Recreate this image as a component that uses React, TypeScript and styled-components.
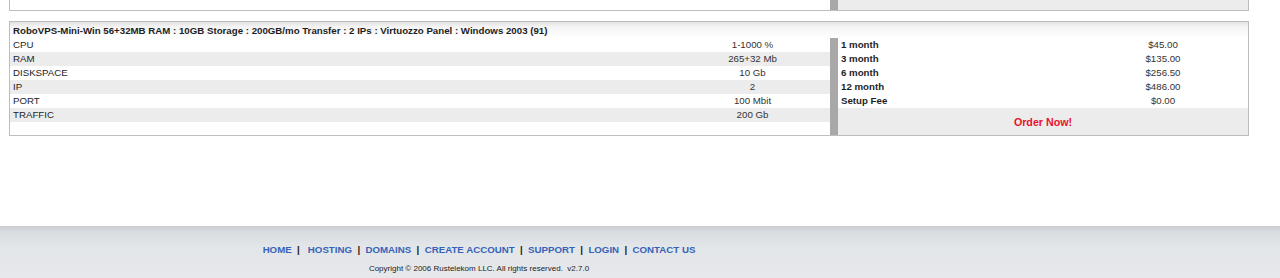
import * as React from "react";
import styled, { createGlobalStyle } from "styled-components";

const GlobalStyle = createGlobalStyle`
  body {
    margin: 0;
    background: #fff;
    font-family: "Liberation Sans", Arial, sans-serif;
    color: #222;
  }
`;

const Page = styled.div`
  height: 278px;
  display: flex;
  flex-direction: column;
  overflow: hidden;
`;

const Content = styled.div`
  flex: 1;
  padding: 0 0 0 9px;
  display: flex;
  flex-direction: column;
  gap: 10px;
`;

const Card = styled.div<{ $tail?: boolean }>`
  width: 1240px;
  box-sizing: border-box;
  border: 1px solid #bdbdbd;
  border-top: ${(p) => (p.$tail ? "none" : "1px solid #bdbdbd")};
  background: #fff;
`;

const Header = styled.div`
  height: 15px;
  padding: 1px 3px 0;
  line-height: 15px;
  font-size: 9.7px;
  font-weight: bold;
  color: #1e1e1e;
  background: linear-gradient(#e2e2e2, #f4f4f4 30%, #fff);
`;

const Body = styled.div<{ $h?: number }>`
  display: grid;
  grid-template-columns: 820px 8px 410px;
  ${(p) => (p.$h ? `height: ${p.$h}px;` : "")}
`;

const Bar = styled.div`
  background: #a8a8a8;
`;

const Specs = styled.div`
  display: flex;
  flex-direction: column;
`;

const Row = styled.div<{ $shade?: boolean; $right?: boolean }>`
  display: grid;
  grid-template-columns: ${(p) => (p.$right ? "240px 1fr" : "665px 1fr")};
  height: 14px;
  line-height: 14px;
  font-size: 9.7px;
  background: ${(p) => (p.$shade ? "#ececec" : "#fff")};
`;

const Label = styled.span<{ $bold?: boolean }>`
  padding-left: 3px;
  font-weight: ${(p) => (p.$bold ? "bold" : "normal")};
  color: #1e1e1e;
`;

const Value = styled.span`
  text-align: center;
  color: #333;
`;

const Prices = styled.div`
  display: flex;
  flex-direction: column;
`;

const OrderCell = styled.div`
  flex: 1;
  background: #ececec;
  display: flex;
  align-items: center;
  justify-content: center;
`;

const OrderLink = styled.a`
  color: #e8112d;
  font-size: 10.7px;
  font-weight: bold;
  text-decoration: none;
`;

const TailRight = styled.div`
  background: #ececec;
`;

const Footer = styled.div`
  height: 52px;
  background: linear-gradient(#c9cdd1 0px, #d8dbdf 6px, #e3e6e9 20px, #e6e8eb);
  display: flex;
  flex-direction: column;
  align-items: flex-start;
  width: 100%;
`;

const FooterInner = styled.div`
  width: 958px;
  display: flex;
  flex-direction: column;
  align-items: center;
`;

const Nav = styled.div`
  margin-top: 17px;
  height: 14px;
  line-height: 14px;
  font-size: 9.7px;
  font-weight: bold;
  color: #222;
  white-space: pre;
`;

const NavLink = styled.a`
  color: #3563b8;
  text-decoration: none;
`;

const Copy = styled.div`
  margin-top: 7px;
  font-size: 8px;
  color: #222;
  white-space: pre;
`;

const specs: [string, string][] = [
  ["CPU", "1-1000 %"],
  ["RAM", "265+32 Mb"],
  ["DISKSPACE", "10 Gb"],
  ["IP", "2"],
  ["PORT", "100 Mbit"],
  ["TRAFFIC", "200 Gb"],
];

const prices: [string, string][] = [
  ["1 month", "$45.00"],
  ["3 month", "$135.00"],
  ["6 month", "$256.50"],
  ["12 month", "$486.00"],
  ["Setup Fee", "$0.00"],
];

const links = ["HOME", "HOSTING", "DOMAINS", "CREATE ACCOUNT", "SUPPORT", "LOGIN", "CONTACT US"];

export default function App() {
  return (
    <Page>
      <GlobalStyle />
      <Content>
        <Card $tail>
          <Body $h={10}>
            <div />
            <Bar />
            <TailRight />
          </Body>
        </Card>
        <Card>
          <Header>
            RoboVPS-Mini-Win 56+32MB RAM : 10GB Storage : 200GB/mo Transfer : 2 IPs : Virtuozzo Panel : Windows 2003 (91)
          </Header>
          <Body $h={97}>
            <Specs>
              {specs.map(([k, v], i) => (
                <Row key={k} $shade={i % 2 === 1}>
                  <Label>{k}</Label>
                  <Value>{v}</Value>
                </Row>
              ))}
            </Specs>
            <Bar />
            <Prices>
              {prices.map(([k, v]) => (
                <Row key={k} $right>
                  <Label $bold>{k}</Label>
                  <Value>{v}</Value>
                </Row>
              ))}
              <OrderCell>
                <OrderLink href="#">Order Now!</OrderLink>
              </OrderCell>
            </Prices>
          </Body>
        </Card>
      </Content>
      <Footer>
        <FooterInner>
          <Nav>
            {links.map((l, i) => (
              <React.Fragment key={l}>
                {i > 0 && (i === 1 ? "  |   " : "  |  ")}
                <NavLink href="#">{l}</NavLink>
              </React.Fragment>
            ))}
          </Nav>
          <Copy>Copyright © 2006 Rustelekom LLC. All rights reserved.  v2.7.0</Copy>
        </FooterInner>
      </Footer>
    </Page>
  );
}
